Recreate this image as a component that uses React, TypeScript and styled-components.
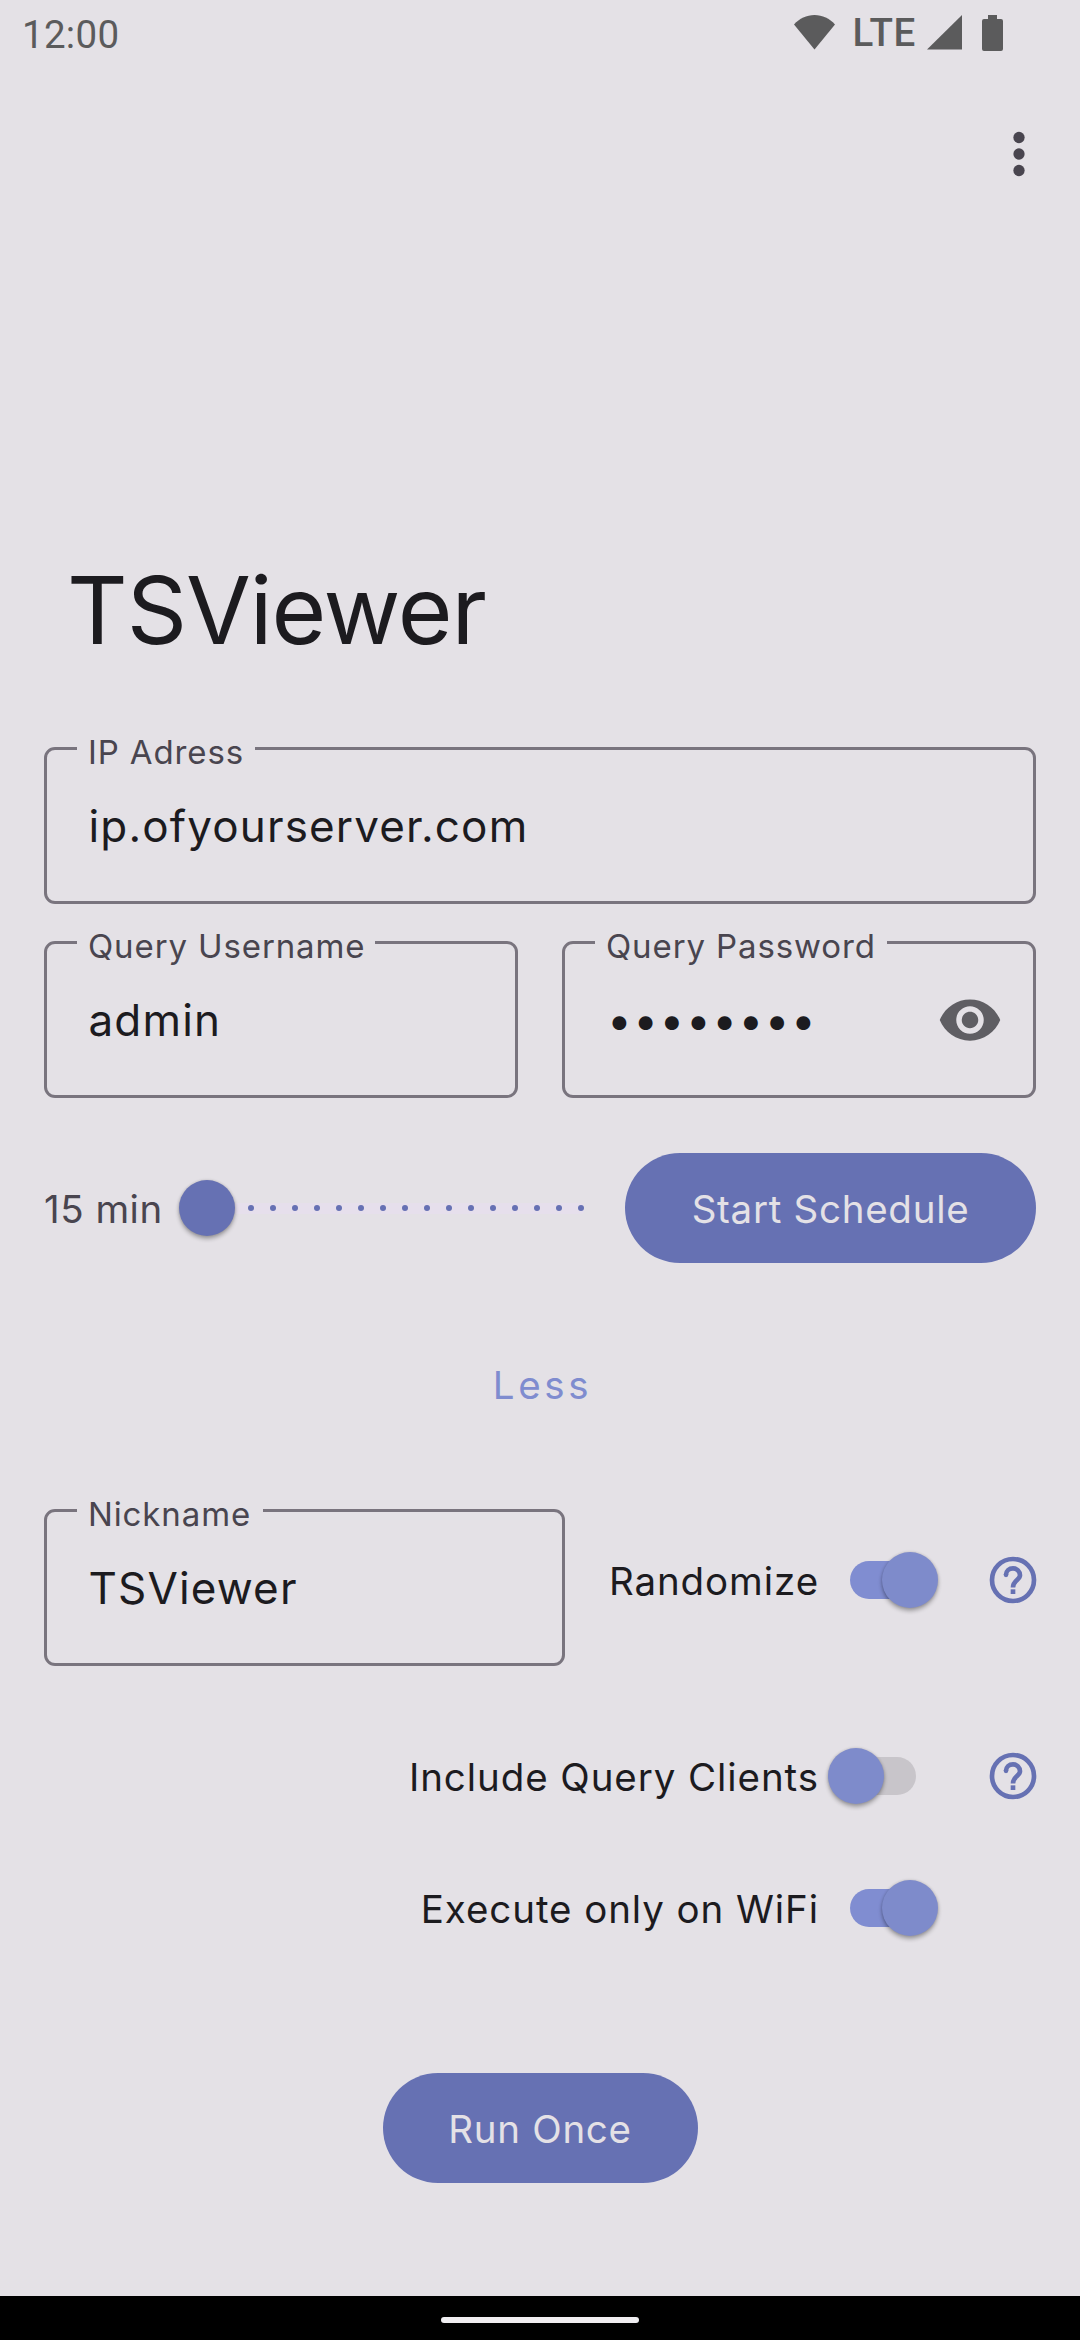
import React, { useState } from "react";
import styled, { createGlobalStyle } from "styled-components";

const c = {
  bg: "#e4e1e6",
  ink: "#1c1b1f",
  muted: "#49454f",
  outline: "#79747e",
  primary: "#6671b3",
  accent: "#7f8ccf",
  knob: "#7e8bcb",
  status: "#5b5b5c",
};

const Global = createGlobalStyle`
  * { box-sizing: border-box; }
  html, body { margin: 0; padding: 0; background: ${c.bg}; }
  body { font-family: Inter, "Liberation Sans", sans-serif; color: ${c.ink}; }
`;

const Screen = styled.div`
  width: 1080px;
  height: 2340px;
  background: ${c.bg};
  display: flex;
  flex-direction: column;
  overflow: hidden;
`;

const StatusBar = styled.header`
  height: 66px;
  flex: none;
  display: flex;
  justify-content: space-between;
  align-items: flex-start;
  padding: 0 77px 0 22px;
  color: ${c.status};
  font-family: Roboto, sans-serif;
  font-size: 38.5px;
`;

const Clock = styled.span`
  line-height: 45px;
  margin-top: 12px;
  letter-spacing: 0.3px;
`;

const StatusIcons = styled.div`
  display: flex;
  align-items: flex-start;
  padding-top: 15px;
`;

const Network = styled.span`
  font-weight: 500;
  line-height: 45px;
  letter-spacing: 0.7px;
  margin: -5px 11px 0 17.6px;
`;

const Battery = styled.svg`
  margin-left: 20px;
`;

const AppBar = styled.div`
  height: 176px;
  flex: none;
  display: flex;
  justify-content: flex-end;
  align-items: flex-start;
  padding: 55px 28px 0 0;
`;

const IconButton = styled.button<{ $size: number }>`
  width: ${(p) => p.$size}px;
  height: ${(p) => p.$size}px;
  flex: none;
  display: flex;
  padding: 0;
  border: 0;
  background: none;
  color: ${c.primary};
  cursor: pointer;
`;

const Title = styled.h1`
  margin: 311px 0 0 67px;
  font-size: 94px;
  line-height: 114px;
  height: 114px;
  font-weight: 400;
  letter-spacing: -1.05px;
`;

const Form = styled.main`
  padding: 0 44px;
  margin-top: 80px;
  display: flex;
  flex-direction: column;
`;

const FieldRow = styled.div`
  display: flex;
  gap: 44px;
  margin-bottom: 37px;
`;

const ScheduleRow = styled.div`
  display: flex;
  align-items: center;
  height: 110px;
  margin-top: 18px;
`;

const NicknameRow = styled.div`
  display: flex;
  margin: 70px 0 44px;
`;

const OptionRow = styled.div<{ $height: number }>`
  flex: 1;
  display: flex;
  align-items: center;
  height: ${(p) => p.$height}px;
  flex: ${(p) => (p.$height === 142 ? "1" : "none")};
`;

const FieldBox = styled.label<{ $width: number }>`
  position: relative;
  width: ${(p) => p.$width}px;
  height: 157px;
  flex: none;
  border: 3px solid ${c.outline};
  border-radius: 11px;
  display: flex;
  align-items: center;
  justify-content: space-between;
  padding: 0 30px 0 41px;
`;

const FieldLabel = styled.span<{ $width: number }>`
  position: absolute;
  left: 30px;
  top: -18px;
  width: ${(p) => p.$width}px;
  padding-left: 11px;
  background: ${c.bg};
  color: ${c.muted};
  font-size: 33px;
  line-height: 40px;
  letter-spacing: 0.88px;
  white-space: nowrap;
`;

const FieldInput = styled.input<{ $masked: boolean }>`
  flex: 1;
  min-width: 0;
  height: 54px;
  border: 0;
  outline: 0;
  padding: 0 0 0 ${(p) => (p.$masked ? 1 : 0.5)}px;
  margin: 1px 0 0;
  background: transparent;
  color: ${c.ink};
  font-family: inherit;
  font-size: 44px;
  line-height: 54px;
  letter-spacing: ${(p) => (p.$masked ? 1.55 : 1.15)}px;
`;

const SliderLabel = styled.span`
  width: 135px;
  color: ${c.muted};
  font-size: 38.5px;
  line-height: 48px;
  letter-spacing: 0.5px;
  white-space: nowrap;
  padding-top: 2px;
`;

const Slider = styled.div`
  width: 446px;
  height: 56px;
  display: flex;
  align-items: center;
`;

const Thumb = styled.span<{ $color: string }>`
  width: 56px;
  height: 56px;
  flex: none;
  border-radius: 50%;
  background: ${(p) => p.$color};
  box-shadow: 0 3px 4px rgba(0, 0, 0, 0.3), 0 0 3px rgba(0, 0, 0, 0.15);
  position: relative;
`;

const Track = styled.div`
  width: 349px;
  height: 11px;
  border-radius: 0 4px 4px 0;
  background: #e6dfec;
  display: flex;
  align-items: center;
  justify-content: flex-end;
  gap: 16px;
`;

const Tick = styled.i`
  width: 6px;
  height: 6px;
  border-radius: 50%;
  background: ${c.primary};
`;

const Pill = styled.button<{ $width: number }>`
  width: ${(p) => p.$width}px;
  height: 110px;
  flex: none;
  border: 0;
  border-radius: 55px;
  padding: 2px 0 0;
  background: ${c.primary};
  color: ${c.bg};
  font-family: inherit;
  font-size: 38.5px;
  letter-spacing: 0.72px;
  cursor: pointer;
`;

const TextButton = styled.button`
  align-self: center;
  margin-top: 66px;
  height: 110px;
  border: 0;
  padding: 2px 0 0 5px;
  background: none;
  color: ${c.accent};
  font-family: inherit;
  font-size: 38.5px;
  letter-spacing: 3.6px;
  cursor: pointer;
`;

const SwitchLabel = styled.span`
  flex: 1;
  text-align: right;
  font-size: 38.5px;
  line-height: 48px;
  letter-spacing: 0.92px;
  padding-top: 2px;
  white-space: nowrap;
`;

const SwitchBox = styled.button<{ $on: boolean }>`
  width: 110px;
  height: 56px;
  flex: none;
  padding: 0;
  border: 0;
  background: none;
  margin: 0 52px 0 9px;
  display: flex;
  align-items: center;
  justify-content: ${(p) => (p.$on ? "flex-end" : "flex-start")};
  cursor: pointer;
`;

const SwitchTrack = styled.span<{ $on: boolean }>`
  width: 66px;
  height: 38px;
  flex: none;
  border-radius: 19px;
  background: ${(p) => (p.$on ? "#808dd1" : "#c8c5ca")};
  order: ${(p) => (p.$on ? 0 : 1)};
  margin: ${(p) => (p.$on ? "0 -34px 0 0" : "0 0 0 -34px")};
`;

const HelpSlot = styled.div`
  width: 46px;
  height: 56px;
  flex: none;
  display: flex;
  align-items: center;
  justify-content: center;
`;

const RunRow = styled.div`
  display: flex;
  justify-content: center;
  margin-top: 99px;
`;

const NavBar = styled.footer`
  height: 44px;
  flex: none;
  margin-top: auto;
  background: #000;
  display: flex;
  justify-content: center;
  padding-top: 21px;
`;

const Handle = styled.span`
  width: 198px;
  height: 6px;
  border-radius: 3px;
  background: #f0eef1;
`;

function Field(props: {
  label: string;
  value: string;
  width: number;
  notch: number;
  type?: string;
  children?: React.ReactNode;
}) {
  return (
    <FieldBox $width={props.width}>
      <FieldLabel $width={props.notch}>{props.label}</FieldLabel>
      <FieldInput
        type={props.type ?? "text"}
        $masked={props.type === "password"}
        defaultValue={props.value}
      />
      {props.children}
    </FieldBox>
  );
}

function Switch({ initial }: { initial: boolean }) {
  const [on, setOn] = useState(initial);
  return (
    <SwitchBox $on={on} role="switch" aria-checked={on} onClick={() => setOn(!on)}>
      <SwitchTrack $on={on} />
      <Thumb $color={c.knob} />
    </SwitchBox>
  );
}

function Help() {
  return (
    <HelpSlot>
      <IconButton $size={56}>
        <svg width="56" height="56" viewBox="0 0 24 24" fill="none" stroke="currentColor" strokeWidth="2">
          <circle cx="12" cy="12" r="9" />
          <circle cx="9" cy="9.8" r="1" fill="currentColor" stroke="none" />
          <path d="M9 9.800C9 8.200 10.340 7 12 7s3 1.340 3 3c0 2-3 2.200-3 5.200" />
          <path d="M11 17h2" />
        </svg>
      </IconButton>
    </HelpSlot>
  );
}

const ticks = Array.from({ length: 16 }, (_, i) => i);

export default function App() {
  return (
    <Screen>
      <Global />
      <StatusBar>
        <Clock>12:00</Clock>
        <StatusIcons>
          <svg width="41" height="35" viewBox="0 0 41 35" fill="currentColor">
            <path d="M0 9.500C5.500 3.500 12.500 0 20.500 0S35.500 3.500 41 9.500L20.500 34.500z" />
          </svg>
          <Network>LTE</Network>
          <svg width="35" height="35" viewBox="0 0 35 35" fill="currentColor">
            <path d="M35 0v34.500H0z" />
          </svg>
          <Battery width="21" height="36" viewBox="0 0 21 36" fill="currentColor">
            <path d="M6 0h9v4h4a2 2 0 0 1 2 2v28a2 2 0 0 1-2 2H2a2 2 0 0 1-2-2V6a2 2 0 0 1 2-2h4z" />
          </Battery>
        </StatusIcons>
      </StatusBar>
      <AppBar>
        <IconButton $size={66}>
          <svg width="66" height="66" viewBox="0 0 24 24" fill={c.muted}>
            <circle cx="12" cy="6" r="2.050" />
            <circle cx="12" cy="12" r="2.050" />
            <circle cx="12" cy="18" r="2.050" />
          </svg>
        </IconButton>
      </AppBar>
      <Title>TSViewer</Title>
      <Form>
        <FieldRow>
          <Field label="IP Adress" value="ip.ofyourserver.com" width={992} notch={178} />
        </FieldRow>
        <FieldRow>
          <Field label="Query Username" value="admin" width={474} notch={298} />
          <Field label="Query Password" value="12345678" type="password" width={474} notch={292}>
            <IconButton $size={66}>
              <svg width="66" height="66" viewBox="0 0 24 24" fill="#5f5e63">
                <path d="M12 4.500C7 4.500 2.730 7.610 1 12c1.730 4.390 6 7.500 11 7.500s9.270-3.110 11-7.500c-1.730-4.390-6-7.500-11-7.500zM12 17c-2.760 0-5-2.240-5-5s2.240-5 5-5 5 2.240 5 5-2.240 5-5 5zm0-8c-1.660 0-3 1.340-3 3s1.340 3 3 3 3-1.340 3-3-1.340-3-3-3z" />
              </svg>
            </IconButton>
          </Field>
        </FieldRow>
        <ScheduleRow>
          <SliderLabel>15 min</SliderLabel>
          <Slider>
            <Thumb $color={c.primary} />
            <Track>
              {ticks.map((i) => (
                <Tick key={i} />
              ))}
            </Track>
          </Slider>
          <Pill $width={411}>Start Schedule</Pill>
        </ScheduleRow>
        <TextButton>Less</TextButton>
        <NicknameRow>
          <Field label="Nickname" value="TSViewer" width={521} notch={186} />
          <OptionRow $height={142}>
            <SwitchLabel>Randomize</SwitchLabel>
            <Switch initial />
            <Help />
          </OptionRow>
        </NicknameRow>
        <OptionRow $height={132}>
          <SwitchLabel>Include Query Clients</SwitchLabel>
          <Switch initial={false} />
          <Help />
        </OptionRow>
        <OptionRow $height={132}>
          <SwitchLabel>Execute only on WiFi</SwitchLabel>
          <Switch initial />
          <HelpSlot />
        </OptionRow>
        <RunRow>
          <Pill $width={315}>Run Once</Pill>
        </RunRow>
      </Form>
      <NavBar>
        <Handle />
      </NavBar>
    </Screen>
  );
}
